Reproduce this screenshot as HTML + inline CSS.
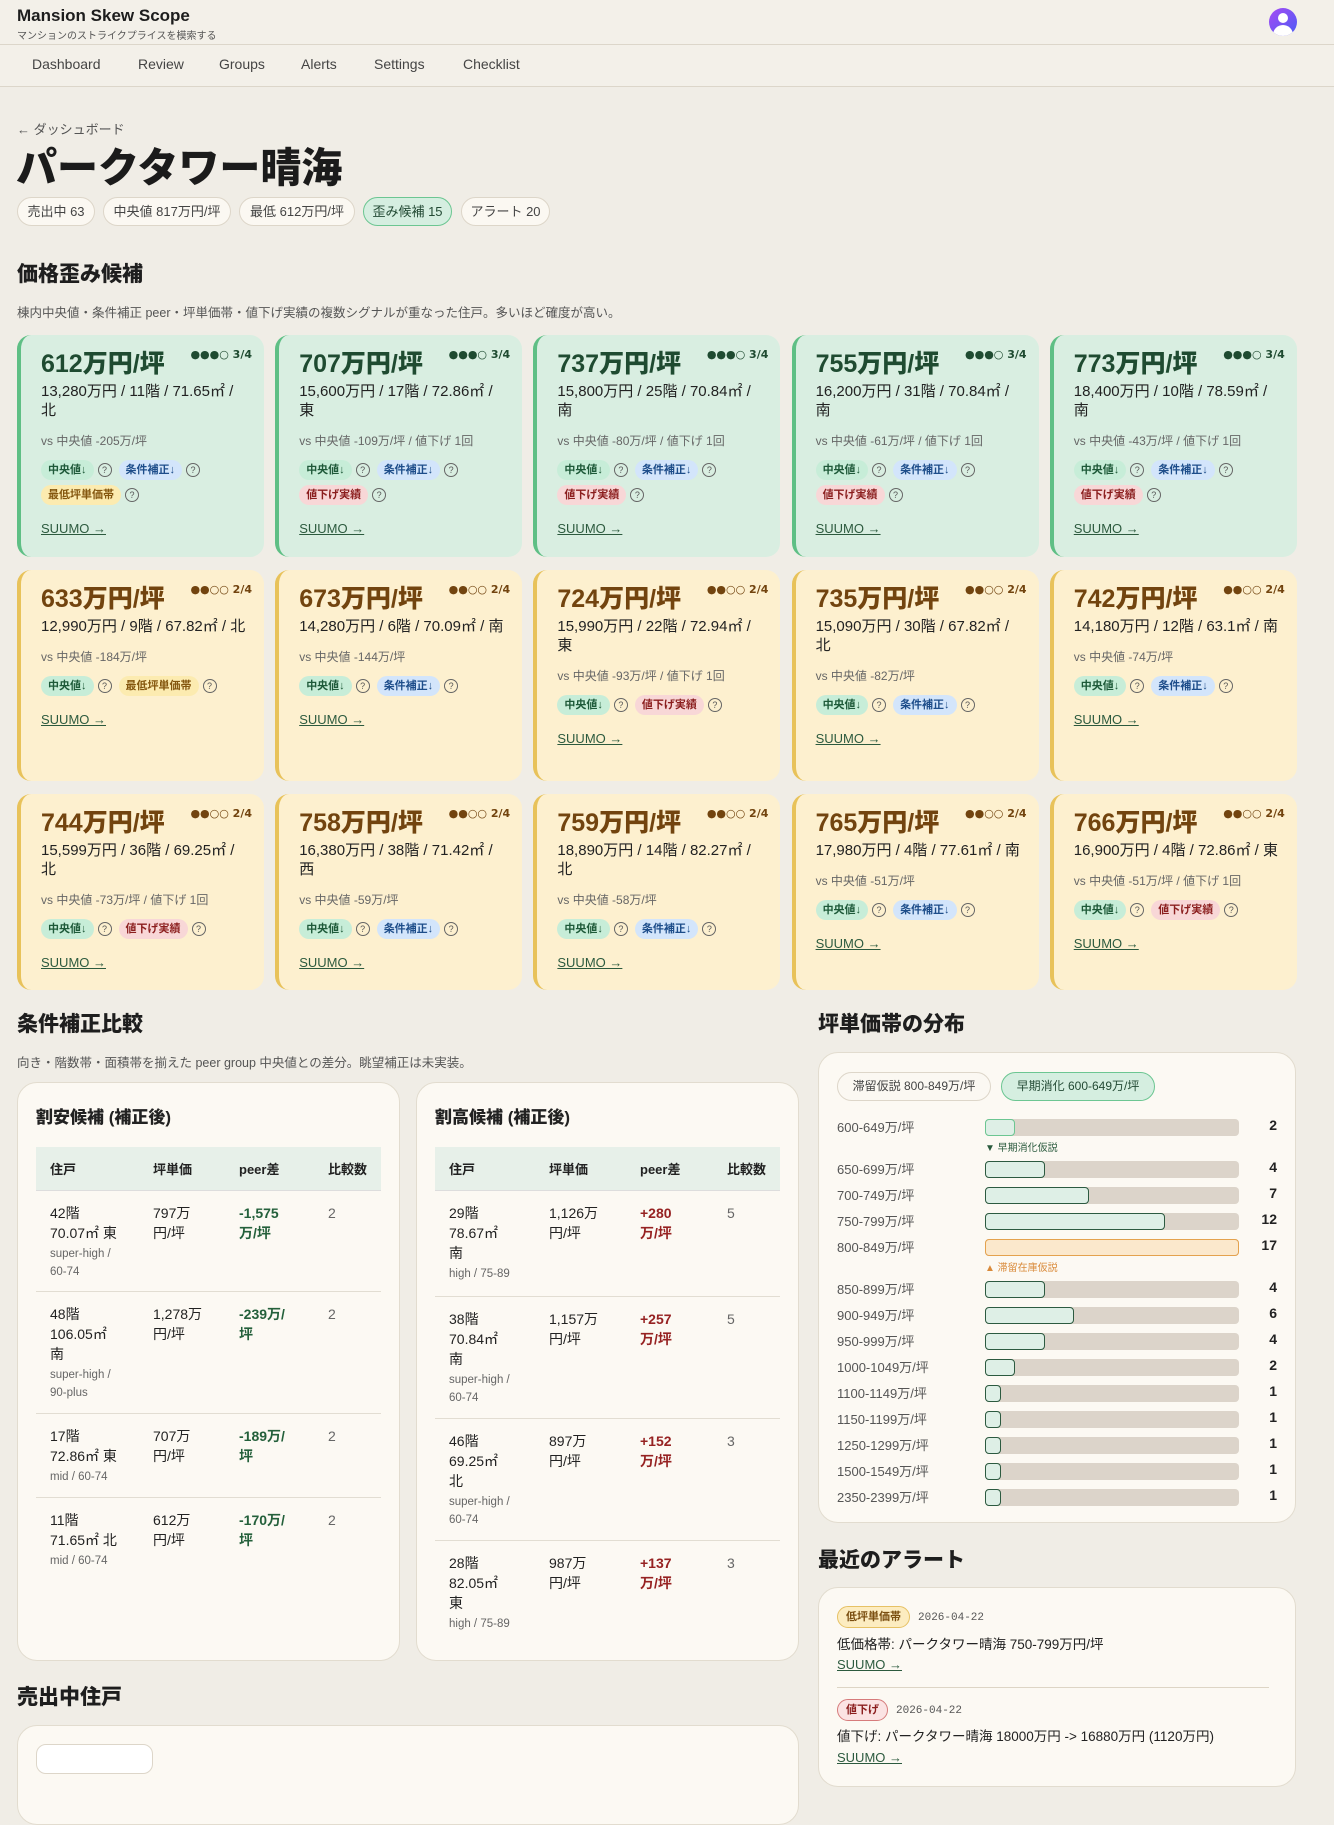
<!DOCTYPE html>
<html><head><meta charset="utf-8">
<style>
*{box-sizing:border-box;margin:0;padding:0}
body{width:1334px;height:1756px;overflow:hidden;background:#f0ede6;font-family:"Liberation Sans","Noto Sans CJK JP",sans-serif;color:#222;position:relative}
.hdr{position:absolute;left:0;top:0;width:1334px;height:45px;background:#f3f0e9;border-bottom:1px solid #dcd6ca}
.hdr .t{position:absolute;left:17px;top:6px;font-size:17px;font-weight:bold;color:#1d1d1d}
.hdr .s{position:absolute;left:17px;top:27px;font-size:10px;color:#555}
.av{position:absolute;left:1269px;top:8px;width:28px;height:28px;border-radius:50%;background:linear-gradient(135deg,#a64bf4,#4b5cf5);overflow:hidden}
.av:before{content:"";position:absolute;left:9px;top:5px;width:10px;height:10px;border-radius:50%;background:#fff}
.av:after{content:"";position:absolute;left:4px;top:17px;width:20px;height:14px;border-radius:10px 10px 0 0;background:#fff}
.nav{position:absolute;left:0;top:45px;width:1334px;height:42px;background:#f3f0e9;border-bottom:1px solid #dcd6ca}
.nav span{position:absolute;top:11px;font-size:14px;color:#444}
.bc{position:absolute;left:17px;top:119px;font-size:13px;color:#555}
h1{position:absolute;left:16px;top:134px;font-size:41px;font-weight:900;color:#1b1b1b;letter-spacing:0}
.pill{position:absolute;top:197px;height:29px;border:1px solid #ddd6c9;background:#fbf8f2;border-radius:15px;font-size:13px;color:#444;line-height:27px;text-align:center}
.pill.g{background:#d5eee0;border-color:#6cc692;color:#234a34}
h2{position:absolute;font-size:21px;font-weight:900;color:#1e1e1e}
.desc{position:absolute;font-size:12.5px;color:#555}
.grid{position:absolute;left:17px;top:335px;width:1280px;display:grid;grid-template-columns:repeat(5,247px);column-gap:11.2px;grid-template-rows:222px 211px 196px;row-gap:13px}
.c{position:relative;border-radius:14px;padding:14px 12px 0 20px;border-left:4px solid #5fbf85;background:#d9eee1}
.c.y{background:#fdf0cf;border-left-color:#e8c25a}
.c .p{font-size:25px;font-weight:900;color:#1f4b31;line-height:30px}
.c.y .p{color:#72440f}
.c .d{position:absolute;right:12px;top:13px;font-size:11px;font-weight:bold;color:#1f4b31;font-family:"DejaVu Sans",sans-serif}
.c.y .d{color:#72440f}
.c .i{font-size:15px;color:#222;line-height:19px;margin-top:3px;white-space:nowrap}
.c .v{font-size:12px;color:#666;margin-top:13px;line-height:16px}
.tags{margin-top:9px;line-height:25px;font-size:0}
.tg{display:inline-block;font-size:11px;font-weight:bold;padding:0 7px;height:20px;line-height:20px;border-radius:10px;vertical-align:middle;margin-right:4px}
.tg.g{background:#c7edd8;color:#1e5a39}.tg.b{background:#d3e5fb;color:#1d4d8a}.tg.yy{background:#fcebb0;color:#84560e}.tg.r{background:#f8d7d7;color:#8b1e1e}
.q{display:inline-block;width:14px;height:14px;border:1px solid #666;border-radius:50%;font-size:9px;line-height:12px;text-align:center;color:#555;vertical-align:middle;margin-right:7px}
.su{display:block;font-size:13px;color:#2c5a3e;text-decoration:underline;margin-top:13px}
.box{position:absolute;background:#fcf9f3;border:1px solid #e2dccf;border-radius:20px}
.box h3{position:absolute;left:18px;top:20px;font-size:17px;font-weight:900}
table{position:absolute;left:18px;top:64px;border-collapse:collapse;font-size:14px}
th{background:#e7f0e9;height:43px;text-align:left;font-size:13px;font-weight:bold;padding:0 0 0 14px;border-bottom:1px solid #ddd}
td{vertical-align:top;padding:12px 0 0 14px;border-bottom:1px solid #e2ddd2;line-height:20px}
td small{display:block;font-size:11.5px;color:#666;line-height:18px;margin-top:2px}
.gn{color:#24603b;font-weight:bold}.rd{color:#962222;font-weight:bold}
td.n{color:#666}
.dr{position:absolute;left:0;width:100%;height:26px}
.dr .l{position:absolute;left:18px;top:-2px;font-size:13px;color:#555}
.dr .bar{position:absolute;left:166px;top:0;width:254px;height:17px;background:#dcd4ca;border-radius:4px}
.dr .f{position:absolute;left:0;top:0;height:17px;background:#deefe6;border:1px solid #2c5a40;border-radius:4px}
.dr .n{position:absolute;right:18px;top:-2px;font-size:14px;font-weight:bold;color:#222}
.mk{position:absolute;left:166px;font-size:10px}
.at{display:inline-block;font-size:11px;font-weight:bold;padding:0 8px;height:22px;line-height:20px;border-radius:11px;border:1px solid}
.dt{font-family:"Liberation Mono",monospace;font-size:11px;color:#555;margin-left:8px}
</style></head><body>
<div class="hdr"><div class="t">Mansion Skew Scope</div><div class="s">マンションのストライクプライスを模索する</div><div class="av"></div></div>
<div class="nav"><span style="left:32px">Dashboard</span><span style="left:138px">Review</span><span style="left:219px">Groups</span><span style="left:301px">Alerts</span><span style="left:374px">Settings</span><span style="left:463px">Checklist</span></div>
<div class="bc">← ダッシュボード</div>
<h1>パークタワー晴海</h1>
<div class="pill" style="left:17px;width:78px">売出中 63</div>
<div class="pill" style="left:103px;width:128px">中央値 817万円/坪</div>
<div class="pill" style="left:239px;width:116px">最低 612万円/坪</div>
<div class="pill g" style="left:363px;width:89px">歪み候補 15</div>
<div class="pill" style="left:461px;width:89px">アラート 20</div>
<h2 style="left:17px;top:258px">価格歪み候補</h2>
<div class="desc" style="left:17px;top:302px">棟内中央値・条件補正 peer・坪単価帯・値下げ実績の複数シグナルが重なった住戸。多いほど確度が高い。</div>

<div class="grid">
<div class="c"><div class="d">●●●○ 3/4</div><div class="p">612万円/坪</div><div class="i">13,280万円 / 11階 / 71.65㎡ /<br>北</div><div class="v">vs 中央値 -205万/坪</div><div class="tags"><span class="tg g">中央値↓</span><span class="q">?</span><span class="tg b">条件補正↓</span><span class="q">?</span><br><span class="tg yy">最低坪単価帯</span><span class="q">?</span></div><a class="su">SUUMO →</a></div>
<div class="c"><div class="d">●●●○ 3/4</div><div class="p">707万円/坪</div><div class="i">15,600万円 / 17階 / 72.86㎡ /<br>東</div><div class="v">vs 中央値 -109万/坪 / 値下げ 1回</div><div class="tags"><span class="tg g">中央値↓</span><span class="q">?</span><span class="tg b">条件補正↓</span><span class="q">?</span><br><span class="tg r">値下げ実績</span><span class="q">?</span></div><a class="su">SUUMO →</a></div>
<div class="c"><div class="d">●●●○ 3/4</div><div class="p">737万円/坪</div><div class="i">15,800万円 / 25階 / 70.84㎡ /<br>南</div><div class="v">vs 中央値 -80万/坪 / 値下げ 1回</div><div class="tags"><span class="tg g">中央値↓</span><span class="q">?</span><span class="tg b">条件補正↓</span><span class="q">?</span><br><span class="tg r">値下げ実績</span><span class="q">?</span></div><a class="su">SUUMO →</a></div>
<div class="c"><div class="d">●●●○ 3/4</div><div class="p">755万円/坪</div><div class="i">16,200万円 / 31階 / 70.84㎡ /<br>南</div><div class="v">vs 中央値 -61万/坪 / 値下げ 1回</div><div class="tags"><span class="tg g">中央値↓</span><span class="q">?</span><span class="tg b">条件補正↓</span><span class="q">?</span><br><span class="tg r">値下げ実績</span><span class="q">?</span></div><a class="su">SUUMO →</a></div>
<div class="c"><div class="d">●●●○ 3/4</div><div class="p">773万円/坪</div><div class="i">18,400万円 / 10階 / 78.59㎡ /<br>南</div><div class="v">vs 中央値 -43万/坪 / 値下げ 1回</div><div class="tags"><span class="tg g">中央値↓</span><span class="q">?</span><span class="tg b">条件補正↓</span><span class="q">?</span><br><span class="tg r">値下げ実績</span><span class="q">?</span></div><a class="su">SUUMO →</a></div>

<div class="c y"><div class="d">●●○○ 2/4</div><div class="p">633万円/坪</div><div class="i">12,990万円 / 9階 / 67.82㎡ / 北</div><div class="v">vs 中央値 -184万/坪</div><div class="tags"><span class="tg g">中央値↓</span><span class="q">?</span><span class="tg yy">最低坪単価帯</span><span class="q">?</span></div><a class="su">SUUMO →</a></div>
<div class="c y"><div class="d">●●○○ 2/4</div><div class="p">673万円/坪</div><div class="i">14,280万円 / 6階 / 70.09㎡ / 南</div><div class="v">vs 中央値 -144万/坪</div><div class="tags"><span class="tg g">中央値↓</span><span class="q">?</span><span class="tg b">条件補正↓</span><span class="q">?</span></div><a class="su">SUUMO →</a></div>
<div class="c y"><div class="d">●●○○ 2/4</div><div class="p">724万円/坪</div><div class="i">15,990万円 / 22階 / 72.94㎡ /<br>東</div><div class="v">vs 中央値 -93万/坪 / 値下げ 1回</div><div class="tags"><span class="tg g">中央値↓</span><span class="q">?</span><span class="tg r">値下げ実績</span><span class="q">?</span></div><a class="su">SUUMO →</a></div>
<div class="c y"><div class="d">●●○○ 2/4</div><div class="p">735万円/坪</div><div class="i">15,090万円 / 30階 / 67.82㎡ /<br>北</div><div class="v">vs 中央値 -82万/坪</div><div class="tags"><span class="tg g">中央値↓</span><span class="q">?</span><span class="tg b">条件補正↓</span><span class="q">?</span></div><a class="su">SUUMO →</a></div>
<div class="c y"><div class="d">●●○○ 2/4</div><div class="p">742万円/坪</div><div class="i">14,180万円 / 12階 / 63.1㎡ / 南</div><div class="v">vs 中央値 -74万/坪</div><div class="tags"><span class="tg g">中央値↓</span><span class="q">?</span><span class="tg b">条件補正↓</span><span class="q">?</span></div><a class="su">SUUMO →</a></div>

<div class="c y"><div class="d">●●○○ 2/4</div><div class="p">744万円/坪</div><div class="i">15,599万円 / 36階 / 69.25㎡ /<br>北</div><div class="v">vs 中央値 -73万/坪 / 値下げ 1回</div><div class="tags"><span class="tg g">中央値↓</span><span class="q">?</span><span class="tg r">値下げ実績</span><span class="q">?</span></div><a class="su">SUUMO →</a></div>
<div class="c y"><div class="d">●●○○ 2/4</div><div class="p">758万円/坪</div><div class="i">16,380万円 / 38階 / 71.42㎡ /<br>西</div><div class="v">vs 中央値 -59万/坪</div><div class="tags"><span class="tg g">中央値↓</span><span class="q">?</span><span class="tg b">条件補正↓</span><span class="q">?</span></div><a class="su">SUUMO →</a></div>
<div class="c y"><div class="d">●●○○ 2/4</div><div class="p">759万円/坪</div><div class="i">18,890万円 / 14階 / 82.27㎡ /<br>北</div><div class="v">vs 中央値 -58万/坪</div><div class="tags"><span class="tg g">中央値↓</span><span class="q">?</span><span class="tg b">条件補正↓</span><span class="q">?</span></div><a class="su">SUUMO →</a></div>
<div class="c y"><div class="d">●●○○ 2/4</div><div class="p">765万円/坪</div><div class="i">17,980万円 / 4階 / 77.61㎡ / 南</div><div class="v">vs 中央値 -51万/坪</div><div class="tags"><span class="tg g">中央値↓</span><span class="q">?</span><span class="tg b">条件補正↓</span><span class="q">?</span></div><a class="su">SUUMO →</a></div>
<div class="c y"><div class="d">●●○○ 2/4</div><div class="p">766万円/坪</div><div class="i">16,900万円 / 4階 / 72.86㎡ / 東</div><div class="v">vs 中央値 -51万/坪 / 値下げ 1回</div><div class="tags"><span class="tg g">中央値↓</span><span class="q">?</span><span class="tg r">値下げ実績</span><span class="q">?</span></div><a class="su">SUUMO →</a></div>
</div>

<h2 style="left:17px;top:1008px">条件補正比較</h2>
<div class="desc" style="left:17px;top:1052px">向き・階数帯・面積帯を揃えた peer group 中央値との差分。眺望補正は未実装。</div>

<div class="box" style="left:17px;top:1082px;width:383px;height:579px">
<h3>割安候補 (補正後)</h3>
<table style="width:345px">
<tr><th style="width:103px">住戸</th><th style="width:86px">坪単価</th><th style="width:89px">peer差</th><th>比較数</th></tr>
<tr style="height:101px"><td>42階<br>70.07㎡ 東<small>super-high /<br>60-74</small></td><td>797万<br>円/坪</td><td class="gn">-1,575<br>万/坪</td><td class="n">2</td></tr>
<tr style="height:122px"><td>48階<br>106.05㎡<br>南<small>super-high /<br>90-plus</small></td><td>1,278万<br>円/坪</td><td class="gn">-239万/<br>坪</td><td class="n">2</td></tr>
<tr style="height:84px"><td>17階<br>72.86㎡ 東<small>mid / 60-74</small></td><td>707万<br>円/坪</td><td class="gn">-189万/<br>坪</td><td class="n">2</td></tr>
<tr style="height:84px"><td style="border:0">11階<br>71.65㎡ 北<small>mid / 60-74</small></td><td style="border:0">612万<br>円/坪</td><td class="gn" style="border:0">-170万/<br>坪</td><td class="n" style="border:0">2</td></tr>
</table></div>

<div class="box" style="left:416px;top:1082px;width:383px;height:579px">
<h3>割高候補 (補正後)</h3>
<table style="width:345px">
<tr><th style="width:100px">住戸</th><th style="width:91px">坪単価</th><th style="width:87px">peer差</th><th>比較数</th></tr>
<tr style="height:106px"><td>29階<br>78.67㎡<br>南<small>high / 75-89</small></td><td>1,126万<br>円/坪</td><td class="rd">+280<br>万/坪</td><td class="n">5</td></tr>
<tr style="height:122px"><td>38階<br>70.84㎡<br>南<small>super-high /<br>60-74</small></td><td>1,157万<br>円/坪</td><td class="rd">+257<br>万/坪</td><td class="n">5</td></tr>
<tr style="height:122px"><td>46階<br>69.25㎡<br>北<small>super-high /<br>60-74</small></td><td>897万<br>円/坪</td><td class="rd">+152<br>万/坪</td><td class="n">3</td></tr>
<tr style="height:106px"><td style="border:0">28階<br>82.05㎡<br>東<small>high / 75-89</small></td><td style="border:0">987万<br>円/坪</td><td class="rd" style="border:0">+137<br>万/坪</td><td class="n" style="border:0">3</td></tr>
</table></div>

<h2 style="left:818px;top:1008px">坪単価帯の分布</h2>
<div class="box" style="left:818px;top:1052px;width:478px;height:471px">
<div class="pill" style="left:18px;top:19px;width:154px;font-size:12px">滞留仮説 800-849万/坪</div>
<div class="pill g" style="left:182px;top:19px;width:154px;font-size:12px">早期消化 600-649万/坪</div>
<div class="dr" style="top:66px"><span class="l">600-649万/坪</span><div class="bar"><div class="f" style="width:30px;border-color:#6cc692"></div></div><span class="n">2</span></div>
<div class="mk" style="top:86px;color:#2a5a3d">▼ 早期消化仮説</div>
<div class="dr" style="top:108px"><span class="l">650-699万/坪</span><div class="bar"><div class="f" style="width:60px"></div></div><span class="n">4</span></div>
<div class="dr" style="top:134px"><span class="l">700-749万/坪</span><div class="bar"><div class="f" style="width:104px"></div></div><span class="n">7</span></div>
<div class="dr" style="top:160px"><span class="l">750-799万/坪</span><div class="bar"><div class="f" style="width:180px"></div></div><span class="n">12</span></div>
<div class="dr" style="top:186px"><span class="l">800-849万/坪</span><div class="bar"><div class="f" style="width:254px;background:#fbe8cc;border-color:#e4a24e"></div></div><span class="n">17</span></div>
<div class="mk" style="top:206px;color:#d98a3a">▲ 滞留在庫仮説</div>
<div class="dr" style="top:228px"><span class="l">850-899万/坪</span><div class="bar"><div class="f" style="width:60px"></div></div><span class="n">4</span></div>
<div class="dr" style="top:254px"><span class="l">900-949万/坪</span><div class="bar"><div class="f" style="width:89px"></div></div><span class="n">6</span></div>
<div class="dr" style="top:280px"><span class="l">950-999万/坪</span><div class="bar"><div class="f" style="width:60px"></div></div><span class="n">4</span></div>
<div class="dr" style="top:306px"><span class="l">1000-1049万/坪</span><div class="bar"><div class="f" style="width:30px"></div></div><span class="n">2</span></div>
<div class="dr" style="top:332px"><span class="l">1100-1149万/坪</span><div class="bar"><div class="f" style="width:16px"></div></div><span class="n">1</span></div>
<div class="dr" style="top:358px"><span class="l">1150-1199万/坪</span><div class="bar"><div class="f" style="width:16px"></div></div><span class="n">1</span></div>
<div class="dr" style="top:384px"><span class="l">1250-1299万/坪</span><div class="bar"><div class="f" style="width:16px"></div></div><span class="n">1</span></div>
<div class="dr" style="top:410px"><span class="l">1500-1549万/坪</span><div class="bar"><div class="f" style="width:16px"></div></div><span class="n">1</span></div>
<div class="dr" style="top:436px"><span class="l">2350-2399万/坪</span><div class="bar"><div class="f" style="width:16px"></div></div><span class="n">1</span></div>
</div>

<h2 style="left:818px;top:1544px">最近のアラート</h2>
<div class="box" style="left:818px;top:1587px;width:478px;height:200px">
<div style="position:absolute;left:18px;top:18px"><span class="at" style="background:#fcecc0;border-color:#e6c164;color:#7a4e10">低坪単価帯</span><span class="dt">2026-04-22</span></div>
<div style="position:absolute;left:18px;top:45px;font-size:13.5px">低価格帯: パークタワー晴海 750-799万円/坪</div>
<div style="position:absolute;left:18px;top:69px;font-size:13px;color:#2c5a3e;text-decoration:underline">SUUMO →</div>
<div style="position:absolute;left:18px;top:99px;width:432px;border-top:1px solid #ddd5c5"></div>
<div style="position:absolute;left:18px;top:111px"><span class="at" style="background:#fbe3e3;border-color:#d67b7b;color:#8b1e1e">値下げ</span><span class="dt">2026-04-22</span></div>
<div style="position:absolute;left:18px;top:137px;font-size:13.5px">値下げ: パークタワー晴海 18000万円 -&gt; 16880万円 (1120万円)</div>
<div style="position:absolute;left:18px;top:162px;font-size:13px;color:#2c5a3e;text-decoration:underline">SUUMO →</div>
</div>

<h2 style="left:17px;top:1681px">売出中住戸</h2>
<div class="box" style="left:17px;top:1725px;width:782px;height:100px">
<div style="position:absolute;left:18px;top:18px;width:117px;height:30px;border:1px solid #ddd6c9;border-radius:10px;background:#fff"></div>
</div>
</body></html>
